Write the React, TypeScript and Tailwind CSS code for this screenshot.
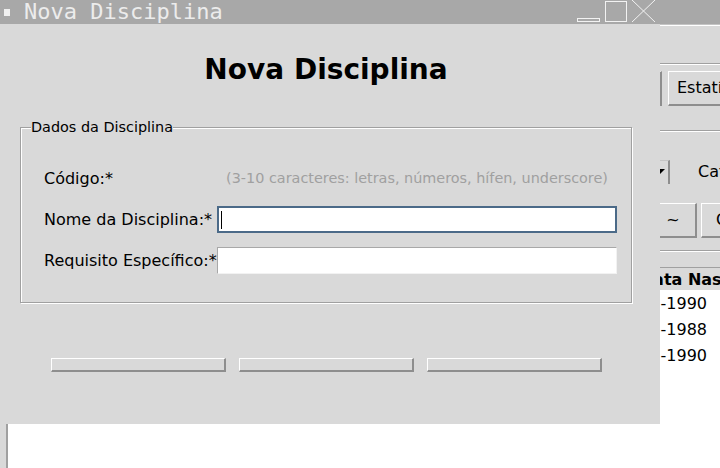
// Tk-style "Nova Disciplina" dialog sitting over the main window

const raised =
  "shrink-0 overflow-hidden whitespace-nowrap border-t border-l border-t-white border-l-white border-b-2 border-r-2 border-b-[#8e8e8e] border-r-[#8e8e8e] bg-[#d9d9d9] text-[16px]";

function Groove() {
  return <div className="h-[2px] shrink-0 border-t border-b border-t-[#a0a0a0] border-b-white" />;
}

const alunos = [
  { mat: "2023001", nome: "Ana Souza", email: "ana@email.com", nasc: "12-03-1990" },
  { mat: "2023002", nome: "Bruno Lima", email: "bruno@email.com", nasc: "25-07-1988" },
  { mat: "2023003", nome: "Carla Dias", email: "carla@email.com", nasc: "08-11-1990" },
];

const cols = "grid-cols-[110px_300px_192px_214px]";

function MainWindow() {
  return (
    <div className="flex h-full flex-col">
      <div className="h-[24px] shrink-0 bg-[#a8a8a8]" />
      <div className="h-px shrink-0 bg-[#c4c4c4]" />
      <div className="flex flex-1 flex-col border-t border-white">
        {/* toolbar */}
        <div className="mt-[37px]">
          <Groove />
        </div>
        <div className="mt-[6px] flex h-[35px] gap-[6px] pl-[10px]">
          <div className={`${raised} flex w-[126px] items-center justify-center`}>Adicionar</div>
          <div className={`${raised} flex w-[126px] items-center justify-center`}>Editar</div>
          <div className={`${raised} flex w-[126px] items-center justify-center`}>Remover</div>
          <div className={`${raised} flex w-[126px] items-center justify-center`}>Disciplinas</div>
          <div className={`${raised} flex w-[124px] items-center justify-center`}>Matrículas</div>
          <div className={`${raised} flex w-[130px] items-center pl-[8px]`}>Estatísticas</div>
        </div>
        <div className="mt-[24px]">
          <Groove />
        </div>

        {/* filtros */}
        <div className="mt-[28px] flex h-[24px] items-center pl-[10px]">
          <span className="w-[90px] shrink-0 text-[16px]">Buscar:</span>
          <div className="ml-[10px] h-[24px] w-[380px] shrink-0 border border-[#a0a0a0] bg-white" />
          <div className="ml-[10px] flex h-[24px] w-[170px] shrink-0 items-center justify-end border-t border-l border-t-[#c4c4c4] border-l-[#c4c4c4] border-r-2 border-r-[#8e8e8e] bg-[#d9d9d9] pr-[2px]">
            <svg width="14" height="7" viewBox="0 0 14 7">
              <polygon points="1,0 13,0 7,6" fill="#000" />
            </svg>
          </div>
          <span className="ml-[28px] shrink-0 text-[16px]">Categoria:</span>
        </div>

        <div className="mt-[19px] flex h-[35px] gap-[4px] pl-[10px]">
          <div className={`${raised} flex w-[200px] items-center justify-center`}>Ordenar por Nome</div>
          <div className={`${raised} flex w-[200px] items-center justify-center`}>Ordenar por Data</div>
          <div className={`${raised} flex w-[228px] items-center justify-center`}>Inverter ordem</div>
          <div className={`${raised} flex w-[47px] items-center justify-center`}>~</div>
          <div className={`${raised} flex w-[120px] items-center pl-[14px]`}>Carregar</div>
        </div>
        <div className="mt-[12px]">
          <Groove />
        </div>

        {/* lista de alunos */}
        <div className="ml-[6px] mt-[15px] flex flex-1 flex-col border-t border-l-2 border-t-[#a0a0a0] border-l-[#a0a0a0]">
          <div className={`grid h-[22px] shrink-0 ${cols} items-center whitespace-nowrap text-[16px] font-bold`}>
            <span className="text-center">Matrícula</span>
            <span className="text-center">Nome</span>
            <span className="text-center">Email</span>
            <span className="text-center">Data Nascimento</span>
          </div>
          <div className="flex-1 bg-white pt-px">
            {alunos.map((a) => (
              <div key={a.mat} className={`grid h-[26px] ${cols} items-center whitespace-nowrap text-[16px]`}>
                <span className="pl-[4px]">{a.mat}</span>
                <span className="pl-[4px]">{a.nome}</span>
                <span className="pl-[4px]">{a.email}</span>
                <span className="pl-[4px]">{a.nasc}</span>
              </div>
            ))}
          </div>
        </div>
      </div>
    </div>
  );
}

function NovaDisciplina() {
  return (
    <div className="absolute left-0 top-0 flex h-[424px] w-[660px] flex-col bg-[#d9d9d9]">
      <div className="flex h-[24px] shrink-0 items-center bg-[#a8a8a8]">
        <span className="ml-[4px] h-[7px] w-[6px] bg-[#f0f0f0]" />
        <span className="ml-[14px] font-['DejaVu_Sans_Mono',monospace] text-[22px] leading-[24px] text-[#ececec]">
          Nova Disciplina
        </span>
        <svg className="ml-auto mr-[2px]" width="82" height="24" viewBox="0 0 82 24" fill="none" stroke="#f2f2f2" strokeWidth="1">
          <rect x="1.5" y="18.5" width="22" height="3" />
          <rect x="29.5" y="1.5" width="21" height="20" />
          <path d="M56 0 L79 22 M79 0 L56 22" />
        </svg>
      </div>

      <div className="flex flex-col px-[20px]">
        <h1 className="mt-[29px] h-[34px] w-[612px] text-center text-[28px] font-bold leading-[34px]">Nova Disciplina</h1>

        <fieldset className="mt-[31px] w-[612px] border border-[#a0a0a0] px-[10px] pt-[22px] pb-[21px] shadow-[inset_1px_1px_0_#fff,1px_1px_0_#fff]">
          <legend className="bg-[#d9d9d9] text-[14.4px] leading-[18px]">Dados da Disciplina</legend>
          <div className="grid grid-cols-[173px_400px] grid-rows-[41px_41px_41px] items-center pl-[13px] text-[16px]">
            <span>Código:*</span>
            <span className="text-center text-[14.4px] text-[#a0a0a0]">
              (3-10 caracteres: letras, números, hífen, underscore)
            </span>

            <span>Nome da Disciplina:*</span>
            <div className="flex h-[27px] items-center border-2 border-[#4b6a88] bg-white">
              <span className="ml-[2px] h-[18px] w-px bg-black" />
            </div>

            <span>Requisito Específico:*</span>
            <div className="h-[27px] border border-t-[#a8a8a8] border-l-[#a8a8a8] border-b-[#f2f2f2] border-r-[#f2f2f2] bg-white" />
          </div>
        </fieldset>

        <div className="mt-[55px] flex w-[612px] justify-center gap-[13px]">
          <button className={`${raised} h-[14px] w-[175px]`} />
          <button className={`${raised} h-[14px] w-[175px]`} />
          <button className={`${raised} h-[14px] w-[175px]`} />
        </div>
      </div>
    </div>
  );
}

export default function App() {
  return (
    <div className="relative h-[468px] w-[720px] overflow-hidden bg-[#d9d9d9] font-['DejaVu_Sans',sans-serif] text-black">
      <MainWindow />
      <NovaDisciplina />
    </div>
  );
}
